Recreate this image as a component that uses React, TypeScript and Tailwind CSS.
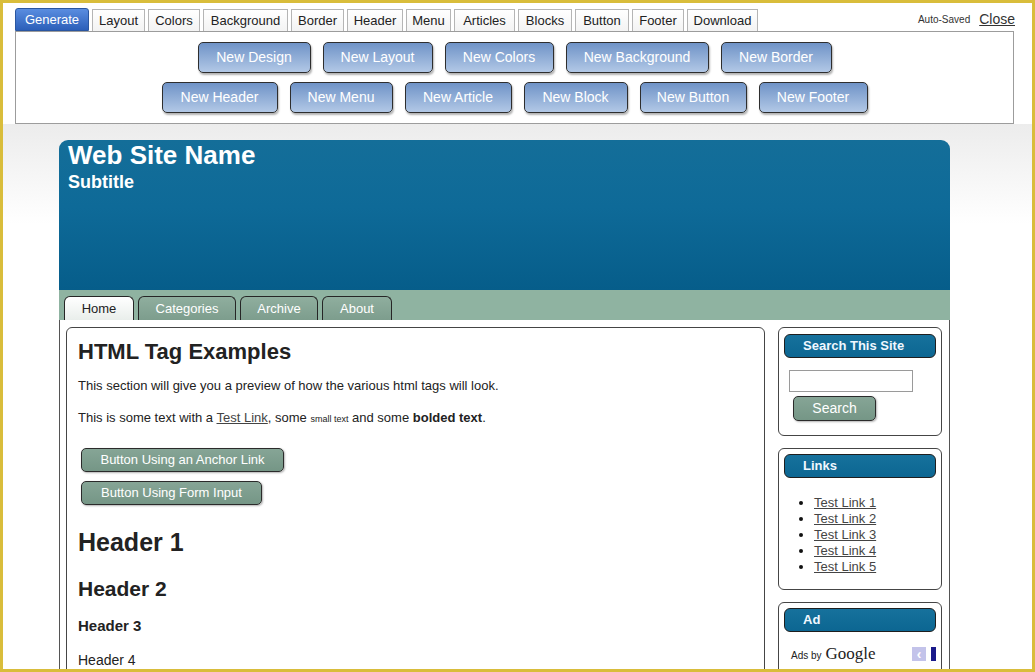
import {FC} from 'react';

const toolTabs = [
    {label: "Layout", w: "w-[53px]"},
    {label: "Colors", w: "w-[52px]"},
    {label: "Background", w: "w-[85px]"},
    {label: "Border", w: "w-[53px]"},
    {label: "Header", w: "w-[56px]"},
    {label: "Menu", w: "w-[45px]"},
    {label: "Articles", w: "w-[61px]"},
    {label: "Blocks", w: "w-[54px]"},
    {label: "Button", w: "w-[54px]"},
    {label: "Footer", w: "w-[52px]"},
    {label: "Download", w: "w-[71px]"},
];

const generateRows = [
    [
        {label: "New Design", w: "w-[113px]"},
        {label: "New Layout", w: "w-[110px]"},
        {label: "New Colors", w: "w-[109px]"},
        {label: "New Background", w: "w-[143px]"},
        {label: "New Border", w: "w-[111px]"},
    ],
    [
        {label: "New Header", w: "w-[116px]"},
        {label: "New Menu", w: "w-[103px]"},
        {label: "New Article", w: "w-[107px]"},
        {label: "New Block", w: "w-[104px]"},
        {label: "New Button", w: "w-[107px]"},
        {label: "New Footer", w: "w-[109px]"},
    ],
];

const navTabs = [
    {label: "Home", w: "w-[70px]", active: true},
    {label: "Categories", w: "w-[98px]", active: false},
    {label: "Archive", w: "w-[78px]", active: false},
    {label: "About", w: "w-[70px]", active: false},
];

const sideLinks = ["Test Link 1", "Test Link 2", "Test Link 3", "Test Link 4", "Test Link 5"];

const sageButton =
    "flex items-center justify-center rounded-[5px] border border-[#2b2b2b] bg-[linear-gradient(180deg,#86a596_0%,#759686_100%)] text-white shadow-[1px_1px_2px_rgba(0,0,0,0.3)]";

const BlockTitle: FC<{ title: string }> = ({title}) => (
    <div className="h-[24px] rounded-[6px] border border-[#1e1e1e] bg-[linear-gradient(180deg,#16719c_0%,#0c6692_100%)] pl-[18px] text-[13px] font-bold leading-[22px] text-[#f0f8ff]">
        {title}
    </div>
);

const Toolbar: FC = () => (
    <div className="bg-white">
        <div className="flex h-[28px] items-end justify-between pl-[12px] pr-[17px]">
            <div className="flex items-end gap-[3px]">
                <div className="flex h-[23px] w-[74px] items-center justify-center rounded-t-[3px] border border-[#2a56a0] bg-[linear-gradient(180deg,#5a8de0_0%,#2c5fb9_100%)] text-[13px] text-white">
                    Generate
                </div>
                {toolTabs.map(({label, w}) => (
                    <div key={label}
                         className={`${w} flex h-[22px] items-center justify-center border border-b-0 border-[#b5b5b5] bg-[linear-gradient(180deg,#ffffff_0%,#f3f3f3_100%)] text-[13px] text-[#222]`}>
                        {label}
                    </div>
                ))}
            </div>
            <div className="flex h-[23px] items-center gap-[9px]">
                <span className="text-[10px] text-[#333]">Auto-Saved</span>
                <span className="text-[14px] text-[#333] underline">Close</span>
            </div>
        </div>
        <div className="ml-[12px] flex h-[93px] w-[999px] flex-col items-center gap-[9px] border border-[#9c9c9c] pt-[10px]">
            {generateRows.map((row, i) => (
                <div key={i} className="flex gap-[12px]">
                    {row.map(({label, w}) => (
                        <div key={label}
                             className={`${w} flex h-[31px] items-center justify-center rounded-[5px] border border-[#2e2e2e] bg-[linear-gradient(180deg,#6f93c7_0%,#b2c8e6_100%)] text-[14px] text-white shadow-[1px_2px_2px_rgba(0,0,0,0.3)]`}>
                            {label}
                        </div>
                    ))}
                </div>
            ))}
        </div>
    </div>
);

const SiteHeader: FC = () => (
    <>
        <div className="h-[150px] rounded-t-[9px] bg-[linear-gradient(180deg,#146e99_0%,#0e6a98_45%,#065d8a_100%)] px-[9px] text-white">
            <div className="text-[26px] font-bold leading-[30px]">Web Site Name</div>
            <div className="mt-[2px] text-[18px] font-bold leading-[20px]">Subtitle</div>
        </div>
        <div className="flex h-[30px] items-end gap-[4px] bg-[#8fb3a1] pl-[5px]">
            {navTabs.map(({label, w, active}) => (
                <div key={label}
                     className={`${w} flex h-[24px] items-center justify-center rounded-t-[6px] border border-b-0 border-[#262626] text-[13px] ${active ? "bg-[linear-gradient(180deg,#ffffff_0%,#e9eeeb_100%)] text-[#222]" : "bg-[linear-gradient(180deg,#8fae9e_0%,#7d9d8d_100%)] text-white"}`}>
                    {label}
                </div>
            ))}
        </div>
    </>
);

const MainArticle: FC = () => (
    <div className="h-[420px] w-[699px] shrink-0 rounded-[6px] border border-[#454545] px-[11px] pt-[11px] text-[#222]">
        <h2 className="text-[22px] font-bold leading-[26px]">HTML Tag Examples</h2>
        <p className="mt-[13px] text-[13px] leading-[16px]">
            This section will give you a preview of how the various html tags will look.
        </p>
        <p className="mt-[16px] text-[13px] leading-[16px]">
            This is some text with a <span className="text-[#444] underline">Test Link</span>, some{" "}
            <span className="text-[9px]">small text</span> and some <b>bolded text</b>.
        </p>
        <div className={`${sageButton} ml-[3px] mt-[21px] h-[24px] w-[203px] text-[13px]`}>
            Button Using an Anchor Link
        </div>
        <div className={`${sageButton} ml-[3px] mt-[9px] h-[24px] w-[181px] text-[13px]`}>
            Button Using Form Input
        </div>
        <h1 className="mt-[22px] text-[25px] font-bold leading-[30px]">Header 1</h1>
        <h2 className="mt-[19px] text-[21px] font-bold leading-[26px]">Header 2</h2>
        <h3 className="mt-[15px] text-[15px] font-bold leading-[18px]">Header 3</h3>
        <h4 className="mt-[17px] text-[14px] leading-[17px]">Header 4</h4>
    </div>
);

const Sidebar: FC = () => (
    <div className="flex w-[164px] shrink-0 flex-col gap-[12px]">
        <div className="rounded-[6px] border border-[#454545] px-[5px] pb-[14px] pt-[6px]">
            <BlockTitle title="Search This Site"/>
            <div className="ml-[5px] mt-[12px] h-[22px] w-[124px] border border-[#9a9a9a] bg-white"/>
            <div className={`${sageButton} ml-[9px] mt-[4px] h-[25px] w-[83px] text-[14px]`}>Search</div>
        </div>
        <div className="rounded-[6px] border border-[#454545] px-[5px] pb-[14px] pt-[5px]">
            <BlockTitle title="Links"/>
            <ul className="mt-[17px] list-disc pl-[30px] text-[13px] leading-[16px] text-[#444]">
                {sideLinks.map((link) => (
                    <li key={link} className="marker:text-[#111]">
                        <span className="underline">{link}</span>
                    </li>
                ))}
            </ul>
        </div>
        <div className="h-[120px] rounded-[6px] border border-[#454545] px-[5px] pt-[5px]">
            <BlockTitle title="Ad"/>
            <div className="mt-[12px] flex items-center justify-between pl-[7px]">
                <div className="flex items-baseline gap-[4px] text-[#222]">
                    <span className="text-[10px]">Ads by</span>
                    <span className="font-['Liberation_Serif',serif] text-[17px] leading-[20px]">Google</span>
                </div>
                <div className="flex items-center gap-[5px]">
                    <div className="flex h-[14px] w-[14px] items-center justify-center bg-[#c3c3ea] text-[14px] font-bold leading-none text-white">‹</div>
                    <div className="h-[14px] w-[5px] bg-[#1a1a8a]"/>
                </div>
            </div>
        </div>
    </div>
);

const App: FC = () => {
    return (
        <div className="h-[672px] w-[1035px] overflow-hidden border-[3px] border-[#d9bd3b] bg-white font-['Liberation_Sans',Arial,sans-serif]">
            <Toolbar/>
            <div className="bg-[linear-gradient(180deg,#ececec_0px,#ffffff_100px)] pt-[16px]">
                <div className="ml-[56px] w-[891px]">
                    <SiteHeader/>
                    <div className="flex gap-[13px] border-x border-[#555] bg-white pl-[6px] pr-[6px] pt-[7px]">
                        <MainArticle/>
                        <Sidebar/>
                    </div>
                </div>
            </div>
        </div>
    );
};

export default App;
